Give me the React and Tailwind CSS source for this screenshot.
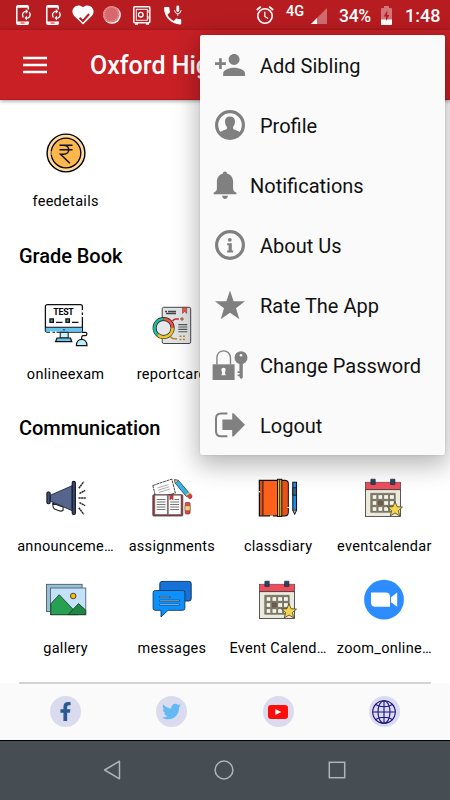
import React from "react";
import { FaFacebookF, FaTwitter } from "react-icons/fa";

function FeeIcon() {
  return (
    <>
      <circle cx="24" cy="24" r="18.9" fill="#ffdb9f" stroke="#000" strokeWidth="1.4" />
      <circle cx="24" cy="24" r="14.8" fill="#feb74c" stroke="#000" strokeWidth="1.3" />
      <path d="M9.3 22.5v3.2" stroke="#ffdb9f" strokeWidth="2" strokeDasharray="1 1" />
      <path d="M17.5 16.2h13M17.5 20.7h13M18 16.2h3.5c7 0 7 9 0 9h-3l9.3 9" fill="none" stroke="#111" strokeWidth="1.5" />
    </>
  );
}

function ExamIcon() {
  return (
    <>
      <rect x="3.4" y="2.6" width="37" height="27.5" rx="2" fill="#fff" stroke="#111" strokeWidth="1.3" />
      <path d="M3.8 25.2h36.2v4.6H3.8z" fill="#66c5ee" />
      <path d="M3.4 25.2h37M22 27v1.4" stroke="#111" strokeWidth="1.1" />
      <path d="M40.4 8v2.5M40.4 13v2M8 30.2h2.5M13 30.2h1.5" stroke="#fff" strokeWidth="2" />
      <path d="M18.2 30.3h8V36h-8z" fill="#c9f1f8" stroke="#111" />
      <path d="M15 36h13.5l1.3 3.7H13.6z" fill="#66c5ee" stroke="#111" strokeWidth="1.2" />
      <path d="M40 30.4h3.4q1.5 0 1.5 1.6t-1.5 1.6H41q-1.4 0-1.4 3.4" fill="none" stroke="#111" strokeWidth="1.2" />
      <path d="M34.4 43.6c0-8.3 10.6-8.3 10.6 0z" fill="#b9effa" stroke="#111" strokeWidth="1.2" />
      <text x="11.3" y="13" fontSize="8.8" fontWeight="700" textLength="20.5" fontFamily="Roboto, sans-serif">TEST</text>
      <path d="M8 16.9h3.4v3.4H8zM24 16.9h3.4v3.4H24z" fill="#31a76b" stroke="#111" strokeWidth="1.3" />
      <path d="M14 20.4h6.5M30 20.4h6.5" stroke="#111" strokeWidth="1.3" />
    </>
  );
}

function ReportIcon() {
  return (
    <>
      <rect x="14.2" y="5.3" width="28.5" height="36.2" rx="1.5" fill="#e0e2e5" stroke="#333" strokeWidth="0.9" />
      <path d="M34.5 5.3h4.2v6.2l-2.1-2-2.1 2z" fill="#f15540" stroke="#333" strokeWidth="0.4" />
      <path d="M17 9.5h2M18 11.5h10M20 9.5h8" stroke="#444" strokeWidth="1.3" />
      <circle cx="15.6" cy="26" r="9" fill="#e6e8eb" stroke="#222" strokeWidth="4" />
      <g fill="none" strokeWidth="2.7">
        <path d="M15.6 17a9 9 0 0 1 9 9" stroke="#f15540" />
        <path d="M24.6 26a9 9 0 0 1-14.8 6.9" stroke="#ecc72c" />
        <path d="M9.8 32.9A9 9 0 0 1 15.6 17" stroke="#20b99a" />
      </g>
      <path d="M24.6 19.3q1-2.3 3-2.3h3.3" fill="none" stroke="#c92c25" strokeWidth="1.6" />
      <circle cx="34" cy="17" r="1.3" fill="#d98a36" stroke="#843722" strokeWidth="0.6" />
      <path d="M30.3 22.6h9M30.3 25h9M30.3 27.4h9M30.3 29.8h9" stroke="#555" strokeWidth="1.1" />
      <path d="M22.5 34.7q1.5 2 3.5 2h3M31.5 34.3h2M35 34.3h2M31.5 37.6h2M35 37.6h2" fill="none" stroke="#b78c28" strokeWidth="1.5" />
    </>
  );
}

function MegaphoneIcon() {
  return (
    <>
      <path d="M10.7 29.3l10.4 3.6v3.3q-2 1.5-4 .5l-4.6-1.8q-1.8-1-1.8-5.6z" fill="#fff" stroke="#222" strokeWidth="1.1" />
      <path d="M8 21.4l22.2-9.7v25L8 27z" fill="#56658d" stroke="#1b2238" strokeWidth="0.9" />
      <rect x="4.9" y="18" width="3.2" height="11.8" rx="1.2" fill="#465277" stroke="#111827" strokeWidth="1.1" />
      <rect x="30.2" y="7.4" width="3.2" height="33" rx="1.5" fill="#3d4869" stroke="#111827" strokeWidth="1.1" />
      <path d="M36.8 14.3l5-6.6M37.5 19.5l5.7-3.1M36.5 24h7.3M37.5 28.6l5.7 3.1M36.8 33.7l5 6.6" stroke="#2b2b2b" strokeWidth="1.5" strokeDasharray="2.2 .4" />
    </>
  );
}

function AssignmentIcon() {
  return (
    <>
      <path d="M4.8 11.5l19-6.4 3.6 14-19.4 5z" fill="#fff" stroke="#333" strokeWidth="0.9" strokeDasharray="3 .6" />
      <path d="M9.5 14l11-3.4M10.2 16.2l11-3.4M11 18.4l11-3.4" stroke="#888" strokeWidth="0.7" />
      <path d="M26.6 5.7l4 .8 11 13-3.3 3-11-13.2z" fill="#3cb0e0" stroke="#1c445a" strokeWidth="0.8" />
      <path d="M26.6 5.7l4 .8-3.3 2.8z" fill="#f1caa0" stroke="#333" strokeWidth="0.5" />
      <path d="M39 22l3-2.7 2 2.5q.4 3-3 2.8z" fill="#e2403d" stroke="#702020" strokeWidth="0.6" />
      <path d="M37.8 21l3.2-2.8 1 1.2-3.1 2.7z" fill="#f0c55d" />
      <rect x="4.8" y="20.7" width="30" height="21.3" rx="1" fill="#8d3c44" stroke="#54383b" strokeWidth="0.8" />
      <path d="M6.8 21.2h12.6v19.3H6.8zM20.3 21.2H33v19.3H20.3z" fill="#fbfbfb" stroke="#555" strokeWidth="0.5" />
      <path d="M8.7 25.5h8.8M8.7 28h8.8M8.7 30.5h8.8M8.7 33h8.8M8.7 35.5h8.8M22.2 28h8.8M22.2 30.5h8.8M22.2 33h8.8M22.2 35.5h8.8M26.5 25.5H31" stroke="#777" strokeWidth="1" />
      <path d="M21.8 21h3.3v4.8l-1.6-1-1.7 1z" fill="#d43c3c" stroke="#611" strokeWidth="0.4" />
      <rect x="37.2" y="28.5" width="4.8" height="11.5" rx="1" fill="#df4b46" stroke="#782c2c" strokeWidth="0.7" />
      <path d="M37 31.7h5.2v5H37z" fill="#f2d27b" stroke="#782c2c" strokeWidth="0.5" />
    </>
  );
}

function DiaryIcon() {
  return (
    <>
      <path d="M5.4 6.4h25.4q3.4 0 3.4 3.4v28.4q0 3.6-3.4 3.6H5.4z" fill="#ff611d" stroke="#111" strokeWidth="1.3" />
      <path d="M28 7h2.8q2.8 0 2.8 2.8v28.4q0 3-2.8 3H28z" fill="#e9521a" />
      <path d="M6 7h2.7v34.2H6z" fill="#e44c1a" />
      <path d="M8.9 6.4v35.4" stroke="#222" strokeWidth="1.1" />
      <path d="M5.4 17v1.6M16 42.2h3M34.2 33v1" stroke="#fff" strokeWidth="1.5" />
      <rect x="23.5" y="5.3" width="4.3" height="37.2" fill="#e9bf42" stroke="#111" strokeWidth="1" />
      <path d="M25.7 5.3v37.2" stroke="#111" strokeWidth="0.9" />
      <path d="M38.8 8.2h3.7v28l-1.8 3.8-1.9-3.8z" fill="#1e90f5" stroke="#111" strokeWidth="1.1" />
      <path d="M38.8 13.7h3.7v7.5h-3.7z" fill="#31658d" stroke="#111" strokeWidth="0.8" />
      <path d="M39 36.2h3.4l-1.7 3.5z" fill="#f1bd91" stroke="#111" strokeWidth="0.6" />
    </>
  );
}

function CalendarIcon() {
  return (
    <>
      <rect x="5.5" y="8.3" width="35" height="34.2" fill="#ece9dd" stroke="#333" strokeWidth="0.8" />
      <path d="M5.8 8.6h34.4v6.8H5.8z" fill="#ee4d5c" />
      <path d="M5.5 15.6h35" stroke="#333" strokeWidth="0.9" />
      <path d="M10.9 5.2h4.3v5.2h-4.3zM30.6 5.2h4.3v5.2h-4.3z" fill="#2f455e" stroke="#18283a" strokeWidth="0.7" />
      <path d="M10.7 19.3h24.6v19H10.7z" fill="#85816e" stroke="#555241" strokeWidth="0.5" />
      {[20.9, 26.9, 32.9].map((y) =>
        [12.3, 18.1, 23.9, 29.7].map((x) => (
          <rect
            key={`${x}-${y}`}
            x={x}
            y={y}
            width="4.4"
            height="4.2"
            fill={x === 18.1 && y === 26.9 ? "#755a4c" : "#f5f3ea"}
            stroke="#4e4a3d"
            strokeWidth="0.4"
          />
        ))
      )}
      <path d="M35 27.7l2.1 5 5.4.4-4.1 3.5 1.3 5.3-4.7-2.9-4.7 2.9 1.3-5.3-4.1-3.5 5.4-.4z" fill="#f5d44f" stroke="#48401f" strokeWidth="0.8" />
    </>
  );
}

function GalleryIcon() {
  return (
    <>
      <rect x="4.5" y="8.3" width="35.6" height="27.2" fill="#97bfd6" stroke="#3d4d58" strokeWidth="0.8" />
      <rect x="8.5" y="12" width="35.3" height="26.8" fill="#c3e1f9" stroke="#456" strokeWidth="0.8" />
      <path d="M8.8 27.8l8.4-9.1L36 38.6H8.8z" fill="#27a052" stroke="#123a20" strokeWidth="0.8" />
      <path d="M26.2 38.6l10.3-11 7.2 6.5v4.5z" fill="#208644" stroke="#123a20" strokeWidth="0.8" />
      <circle cx="31.2" cy="20" r="2.8" fill="#f5b914" stroke="#463b18" strokeWidth="0.9" />
    </>
  );
}

function MessagesIcon() {
  return (
    <>
      <rect x="11.8" y="5.4" width="31.4" height="19.6" rx="2.2" fill="#1672d7" stroke="#0d2d52" strokeWidth="0.9" />
      <path d="M7.2 14.5h27.6q2.1 0 2.1 2.1v15.6q0 2.1-2.1 2.1H20l-7 6.7v-6.7H7.2q-2.1 0-2.1-2.1V16.6q0-2.1 2.1-2.1z" fill="#0c90fc" stroke="#0d3a63" strokeWidth="0.9" />
      <path d="M11.5 21h10.7M11.5 24.8h20M11.5 28.6h20" stroke="#113e6b" strokeWidth="1.9" />
      <path d="M12 21h9.7M12 24.8h19M12 28.6h19" stroke="#a4cff5" strokeWidth="0.8" />
    </>
  );
}

function ZoomIcon() {
  return (
    <>
      <circle cx="24" cy="23.7" r="19.9" fill="#2d8cff" />
      <path d="M11 16.6h14.6q4.4 0 4.4 4.3v9.9H15.2Q11 30.8 11 26.6zM31 21.3l6.2-4.7v14.2L31 26.2z" fill="#fff" />
    </>
  );
}

const SECTIONS = [
  { items: [{ label: "feedetails", icon: FeeIcon }] },
  {
    title: "Grade Book",
    items: [
      { label: "onlineexam", icon: ExamIcon },
      { label: "reportcard", icon: ReportIcon },
    ],
  },
  {
    title: "Communication",
    items: [
      { label: "announceme…", icon: MegaphoneIcon },
      { label: "assignments", icon: AssignmentIcon },
      { label: "classdiary", icon: DiaryIcon },
      { label: "eventcalendar", icon: CalendarIcon },
      { label: "gallery", icon: GalleryIcon },
      { label: "messages", icon: MessagesIcon },
      { label: "Event Calend…", icon: CalendarIcon },
      { label: "zoom_online…", icon: ZoomIcon },
    ],
  },
];

const MENU = [
  {
    label: "Add Sibling",
    art: (
      <g transform="translate(-1.4 -1.4) scale(1.367)">
        <path d="M15 12c2.21 0 4-1.79 4-4s-1.79-4-4-4-4 1.79-4 4 1.79 4 4 4zm-9-2V7H4v3H1v2h3v3h2v-3h3v-2H6zm9 4c-2.67 0-8 1.34-8 4v2h16v-2c0-2.66-5.33-4-8-4z" />
      </g>
    ),
  },
  {
    label: "Profile",
    art: (
      <>
        <circle cx="15" cy="15" r="13.4" fill="none" stroke="#808080" strokeWidth="3.2" />
        <path d="M15 6.6c3.200 0 5 2 5 4.900 0 2.300-.700 4-1.900 5.200v2c1 1.300 4.900 1.700 7.300 3.600Q21 28 15 28T4.600 22.300c2.400-1.900 6.300-2.300 7.300-3.600v-2c-1.200-1.200-1.900-2.900-1.900-5.200 0-2.900 1.800-4.900 5-4.900z" />
      </>
    ),
  },
  {
    label: "Notifications",
    narrow: true,
    art: (
      <path d="M10 1.600c1.300 0 2 .8 2 2 4 1 6.100 4.200 6.100 8.300v6.500c0 2 1.200 3.300 3.300 4.300v1.500H-1.400v-1.500c2.100-1 3.300-2.300 3.300-4.300v-6.500c0-4.100 2.100-7.300 6.100-8.300 0-1.200.7-2 2-2zM7 25.800h6q-.8 3.200-3 3.200t-3-3.200z" />
    ),
  },
  {
    label: "About Us",
    art: (
      <>
        <circle cx="15" cy="15" r="13.4" fill="none" stroke="#808080" strokeWidth="3.200" />
        <circle cx="14.8" cy="9.8" r="1.9" />
        <path d="M12.200 13.200h4.600v7.300h1.300v1.900h-6v-1.900h1.500v-5.300h-1.400z" />
      </>
    ),
  },
  {
    label: "Rate The App",
    art: <path d="M15 .5l3.600 10.700H30l-9 7 3.400 11L15 22.700l-9.300 6.500L9 18.200l-9-7h11.400z" />,
  },
  {
    label: "Change Password",
    art: (
      <>
        <path d="M1.900 14.500V8.200C1.900 3.600 4.900.9 8.600.9s6.900 2.700 6.900 7.300v6.300" fill="none" stroke="#808080" strokeWidth="1.400" />
        <path d="M-2.400 14.300h22V30h-22z" />
        <circle cx="8.500" cy="20" r="2.200" fill="#fafafa" />
        <path d="M7.600 20h1.900l1.100 5.300H6.500z" fill="#fafafa" />
        <circle cx="26" cy="7.700" r="6.500" />
        <circle cx="26" cy="5.200" r="1.300" fill="#fafafa" />
        <path d="M24.400 13.500h3.400v14l-1.700 1.600-1.500-1.600v-1.200h-2v-1.800h2v-1.400h-2v-1.900h1.800z" />
      </>
    ),
  },
  {
    label: "Logout",
    art: (
      <>
        <path d="M12.400 3.600H6q-5 0-5 5v12.600q0 5 5 5h6.400" fill="none" stroke="#808080" strokeWidth="2" />
        <path d="M7.400 9.500h9.800V3.200h1.300L30 14.700 18.500 26.400h-1.300V20H7.400z" />
      </>
    ),
  },
];

function PhoneSync() {
  return (
    <svg viewBox="0 0 16 20" className="h-5 w-4 overflow-visible" fill="none" stroke="#fff">
      <path d="M12.3 4.500V2q0-1.200-1.200-1.200H2Q.8.800.8 2v16q0 1.200 1.200 1.200h9.100q1.200 0 1.200-1.200v-1.500" strokeWidth="1.500" />
      <path d="M1 1.600h11M1 17.600h11" strokeWidth="2.400" />
      <path d="M4.600 18h4" stroke="#b71c21" strokeWidth="0.900" />
      <path d="M7.300 12.500q-2-4 1.200-5.800l2-.3M13.300 7q2.200 3.800-1 5.800l-2 .3" strokeWidth="1.300" />
      <path d="M9.800 4l2.500 2.400-2.500 2.400zM11 10.700l-2.500 2.400 2.500 2.400z" fill="#fff" stroke="none" />
    </svg>
  );
}

function StatusBar() {
  return (
    <div className="flex h-[30px] items-center bg-[#b71c21] text-white">
      <div className="flex flex-1 items-center pl-4">
        <PhoneSync />
        <div className="w-[14px]" />
        <PhoneSync />
        <svg viewBox="0 0 22 20" className="ml-[9.500px] h-5 w-[22px]">
          <path d="M11 19.500L2 10.700C-3 4.500 5-3 11 2.300 17-3 25 4.500 20 10.700z" fill="#fff" />
          <path d="M7.600 12.700l3.300 3.300 6.200-7" fill="none" stroke="#b71c21" strokeWidth="2" />
        </svg>
        <svg viewBox="0 0 18 18" className="ml-[9.500px] h-[18px] w-[18px]">
          <circle cx="9" cy="9" r="8.800" fill="#fff" />
          <circle cx="8.300" cy="8.300" r="8.300" fill="#d9686c" />
          <circle cx="8.300" cy="8.300" r="7.200" fill="none" stroke="#e8a0a2" strokeWidth="1.500" strokeDasharray="1 1" />
        </svg>
        <svg viewBox="0 0 18 19" className="ml-3 h-[19px] w-[18px]" fill="none" stroke="#fff">
          <rect x=".8" y=".8" width="16" height="16" rx="1" strokeWidth="1.500" />
          <rect x="3.300" y="3.300" width="11" height="11" strokeWidth="1" />
          <circle cx="7.800" cy="8.700" r="2.300" strokeWidth="1.300" />
          <path d="M15 4v3M15 10v3" strokeWidth="1" />
          <path d="M2 18h3M13 18h3" strokeWidth="1.600" />
        </svg>
        <svg viewBox="0 0 18 20" className="ml-[12.500px] h-5 w-[18px] overflow-visible" fill="#fff">
          <path d="M3.500 9.700c1.400 2.700 3.500 4.900 6.200 6.200l2.100-2.100q.4-.4 1-.2 1.600.5 3.400.5 1 0 1 1v3.300q0 1-1 1C7.300 19.400 0 12 0 3q0-1 1-1h3.400q1 0 1 1 0 1.800.5 3.400.2.6-.2 1z" />
          <rect x="12.400" y="0.500" width="2.800" height="6.500" rx="1.400" />
          <path d="M10.500 5.200q.3 3.500 3.300 3.500t3.300-3.500M13.800 8.600v2.200" fill="none" stroke="#fff" strokeWidth="1" />
        </svg>
      </div>
      <svg viewBox="0 0 18 20" className="h-5 w-[18px]" fill="none" stroke="#fff">
        <circle cx="9" cy="11" r="7.200" strokeWidth="1.600" />
        <path d="M.8 5l4-3.400M17.200 5l-4-3.400" strokeWidth="1.800" />
        <path d="M8.800 6.800v4.700l3.300 2" strokeWidth="1.300" />
      </svg>
      <span className="ml-3 -mt-[7px] w-[20px] text-[14.500px] leading-4 font-medium">4G</span>
      <svg viewBox="0 0 16 16" className="ml-[5px] mt-[2px] h-4 w-4">
        <path d="M16 0v16H0z" fill="#fff" fillOpacity=".35" />
        <path d="M6 10v6H0z" fill="#fff" />
      </svg>
      <span className="ml-3 mt-[2px] w-[33px] text-[17.500px] leading-5 font-medium tracking-[-0.300px] whitespace-nowrap">34%</span>
      <svg viewBox="0 0 11 19" className="ml-[9px] h-[19px] w-[11px]">
        <path d="M3 0h5v2h2q1 0 1 1v15q0 1-1 1H1q-1 0-1-1V3q0-1 1-1h2z" fill="#fff" fillOpacity=".4" />
        <path d="M0 13.500h11V18q0 1-1 1H1q-1 0-1-1z" fill="#fff" />
        <path d="M6.300 4.300L2.800 10.500h2.200v4.600l3.400-6.200H6.300z" fill="#b71c21" />
      </svg>
      <span className="ml-[13px] mr-[11px] mt-[2px] w-[34px] text-[18px] leading-5 font-medium whitespace-nowrap">1:48</span>
    </div>
  );
}

function AppMenu() {
  return (
    <ul className="absolute top-[35px] left-[200px] z-20 h-[420px] w-[245px] rounded-[2px] bg-[#fafafa] shadow-[0_8px_24px_3px_rgba(0,0,0,0.28),0_0_2px_rgba(0,0,0,0.15)]">
      {MENU.map(({ label, art, narrow }) => (
        <li key={label} className="flex h-[60px] items-center gap-[15px] pl-[15px]">
          <svg
            viewBox={narrow ? "0 0 20 30" : "0 0 30 30"}
            className={`h-[30px] shrink-0 overflow-visible ${narrow ? "w-[20px]" : "w-[30px]"}`}
            fill="#808080"
          >
            {art}
          </svg>
          <span className="mt-[2px] text-[20px] leading-6 whitespace-nowrap text-[#111]">{label}</span>
        </li>
      ))}
    </ul>
  );
}

function Tile({ label, icon: Icon }) {
  return (
    <div className="flex min-w-0 flex-col items-center gap-4">
      <svg viewBox="0 0 48 48" className="h-12 w-12">
        <Icon />
      </svg>
      <span className="text-[14.500px] leading-[18px] tracking-[0.300px] whitespace-nowrap">{label}</span>
    </div>
  );
}

function SocialBar() {
  return (
    <footer className="relative h-[57px] bg-[#fafafa]">
      <div className="absolute -top-[1px] right-[19px] left-[19px] h-[2px] bg-[#d3d3d3]" />
      <div className="grid h-full grid-cols-4 items-center justify-items-center px-[12.500px]">
        <span className="grid h-[31px] w-[31px] place-items-center rounded-full bg-[#dadbee]">
          <FaFacebookF size={19} color="#2b5a94" />
        </span>
        <span className="grid h-[31px] w-[31px] place-items-center rounded-full bg-[#dadbee]">
          <FaTwitter size={19} color="#64b9f5" />
        </span>
        <span className="grid h-[31px] w-[31px] place-items-center rounded-full bg-[#dadbee]">
          <svg viewBox="0 0 20 14" className="h-[14px] w-5">
            <rect width="20" height="14" rx="3" fill="#fb0d09" />
            <path d="M7.300 4l6 3-6 3z" fill="#fff" />
          </svg>
        </span>
        <span className="grid h-[31px] w-[31px] place-items-center rounded-full bg-[#dadbee]">
          <svg viewBox="0 0 24 24" className="h-6 w-6" fill="none" stroke="#1f1284" strokeWidth="1.100">
            <circle cx="12" cy="12" r="11.300" />
            <ellipse cx="12" cy="12" rx="6" ry="11.300" />
            <path d="M12 .7v22.600M.7 12h22.600M3.500 4.500q8.500 4.500 17 0M3.500 19.500q8.500-4.500 17 0" />
          </svg>
        </span>
      </div>
    </footer>
  );
}

function NavBar() {
  return (
    <nav className="grid h-[60px] grid-cols-3 items-center justify-items-center border-t border-black bg-[#464d53] pr-[57px] pb-[1px] pl-[56px]">
      <svg viewBox="0 0 20 20" className="h-5 w-5" fill="none" stroke="#b0b4b6" strokeWidth="1.500" strokeLinejoin="round">
        <path d="M17.500 1.200v17.600L2.600 10z" />
      </svg>
      <svg viewBox="0 0 20 20" className="h-5 w-5" fill="none" stroke="#b0b4b6" strokeWidth="1.500">
        <circle cx="10" cy="10" r="8.900" />
      </svg>
      <svg viewBox="0 0 20 20" className="h-5 w-5" fill="none" stroke="#b0b4b6" strokeWidth="1.500">
        <rect x="2.300" y="2.300" width="15.400" height="15.400" />
      </svg>
    </nav>
  );
}

export default function App() {
  return (
    <div className="relative flex h-[800px] w-[450px] flex-col overflow-hidden bg-white font-['Roboto',sans-serif] text-black">
      <StatusBar />
      <header className="relative flex h-[70px] items-center border-b border-[#b3191e] bg-[#c82025] pl-[23px] shadow-[0_1px_4px_rgba(0,0,0,0.4)]">
        <svg viewBox="0 0 24 18" className="h-[18px] w-6" stroke="#fff" strokeWidth="2.400">
          <path d="M0 2h24M0 9h24M0 16h24" />
        </svg>
        <h1 className="mt-[3px] ml-[43px] text-[25px] leading-8 font-medium whitespace-nowrap text-white">Oxford High</h1>
      </header>

      <main className="flex-1 pt-[29px]">
        {SECTIONS.map(({ title, items }, i) => (
          <section key={i} className="last:-mt-px">
            {title && (
              <h2 className="mt-[33px] mb-[34px] pl-[19px] text-[20px] leading-6 font-medium tracking-[-0.050px]">{title}</h2>
            )}
            <div className="grid grid-cols-4 gap-y-5 px-[12.500px]">
              {items.map((item) => (
                <Tile key={item.label} {...item} />
              ))}
            </div>
          </section>
        ))}
      </main>

      <SocialBar />
      <NavBar />
      <AppMenu />
    </div>
  );
}
